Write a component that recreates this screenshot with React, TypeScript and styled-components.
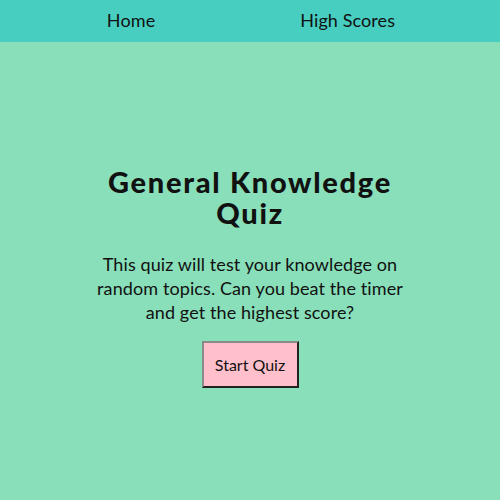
import React from "react";
import styled, { createGlobalStyle } from "styled-components";

const Global = createGlobalStyle`
  html, body { margin: 0; padding: 0; }
  body {
    background: #88dfb9;
    font-family: Lato, "Open Sans", sans-serif;
    color: #111;
  }
`;

const Header = styled.header`
  height: 42px;
  background: #47cec0;
  display: flex;
  align-items: center;
  justify-content: center;
`;

const Nav = styled.nav`
  display: flex;
  gap: 145px;
  margin-top: -2px;
  padding-left: 2px;
`;

const NavLink = styled.a`
  font-size: 18px;
  color: #111;
  text-decoration: none;
  letter-spacing: 0.1px;
`;

const Main = styled.main`
  display: flex;
  flex-direction: column;
  align-items: center;
  text-align: center;
  padding-top: 124px;
`;

const Title = styled.h1`
  margin: 0;
  width: 320px;
  font-size: 29px;
  line-height: 31px;
  font-weight: 900;
  letter-spacing: 1.7px;
`;

const Intro = styled.p`
  margin: 24px 0 0;
  width: 320px;
  font-size: 18px;
  line-height: 24px;
  letter-spacing: 0.1px;
`;

const StartButton = styled.button`
  margin-top: 17px;
  width: 97px;
  height: 47px;
  background: #ffc0cb;
  border: 2px solid;
  border-color: #8a8a8a #222 #222 #8a8a8a;
  font-family: Lato, sans-serif;
  font-size: 16px;
  color: #111;
  padding: 0;
`;

export default function App() {
  return (
    <>
      <Global />
      <Header>
        <Nav>
          <NavLink href="#">Home</NavLink>
          <NavLink href="#">High Scores</NavLink>
        </Nav>
      </Header>
      <Main>
        <Title>General Knowledge Quiz</Title>
        <Intro>
          This quiz will test your knowledge on random topics. Can you beat the
          timer and get the highest score?
        </Intro>
        <StartButton>Start Quiz</StartButton>
      </Main>
    </>
  );
}
